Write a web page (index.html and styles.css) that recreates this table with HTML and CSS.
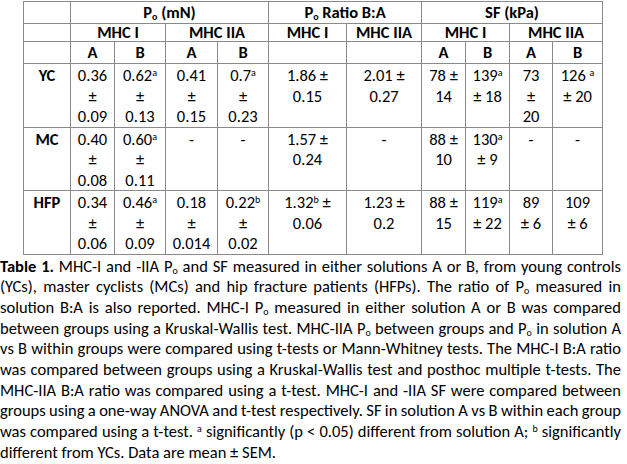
FILE: index.html
```html
<!DOCTYPE html>
<html>
<head>
<meta charset="utf-8">
<link rel="stylesheet" href="styles.css">
</head>
<body>
<div class="figure">
  <table class="data">
    <colgroup>
      <col class="c-grp"><col class="c1"><col class="c2"><col class="c3"><col class="c4">
      <col class="c5"><col class="c6"><col class="c7"><col class="c8"><col class="c9"><col class="c10">
    </colgroup>
    <tr class="h1">
      <th></th>
      <th colspan="4">P<sub>o</sub> (mN)</th>
      <th colspan="2">P<sub>o</sub> Ratio B:A</th>
      <th colspan="4">SF (kPa)</th>
    </tr>
    <tr class="h2">
      <th></th>
      <th colspan="2">MHC I</th>
      <th colspan="2">MHC IIA</th>
      <th>MHC I</th>
      <th>MHC IIA</th>
      <th colspan="2">MHC I</th>
      <th colspan="2">MHC IIA</th>
    </tr>
    <tr class="h3">
      <th></th>
      <th>A</th><th>B</th><th>A</th><th>B</th>
      <th></th><th></th>
      <th>A</th><th>B</th><th>A</th><th>B</th>
    </tr>
    <tr class="row">
      <th class="grp">YC</th>
      <td>0.36<br>±<br>0.09</td>
      <td>0.62<sup>a</sup><br>±<br>0.13</td>
      <td>0.41<br>±<br>0.15</td>
      <td>0.7<sup>a</sup><br>±<br>0.23</td>
      <td>1.86 ±<br>0.15</td>
      <td>2.01 ±<br>0.27</td>
      <td>78 ±<br>14</td>
      <td>139<sup>a</sup><br>± 18</td>
      <td>73<br>±<br>20</td>
      <td>126 <sup>a</sup><br>± 20</td>
    </tr>
    <tr class="row">
      <th class="grp">MC</th>
      <td>0.40<br>±<br>0.08</td>
      <td>0.60<sup>a</sup><br>±<br>0.11</td>
      <td>-</td>
      <td>-</td>
      <td>1.57 ±<br>0.24</td>
      <td>-</td>
      <td>88 ±<br>10</td>
      <td>130<sup>a</sup><br>± 9</td>
      <td>-</td>
      <td>-</td>
    </tr>
    <tr class="row">
      <th class="grp">HFP</th>
      <td>0.34<br>±<br>0.06</td>
      <td>0.46<sup>a</sup><br>±<br>0.09</td>
      <td>0.18<br>±<br>0.014</td>
      <td>0.22<sup>b</sup><br>±<br>0.02</td>
      <td>1.32<sup>b</sup> ±<br>0.06</td>
      <td>1.23 ±<br>0.2</td>
      <td>88 ±<br>15</td>
      <td>119<sup>a</sup><br>± 22</td>
      <td>89<br>± 6</td>
      <td>109<br>± 6</td>
    </tr>
  </table>
  <p class="caption">
    <span class="ln"><b>Table 1.</b> MHC-I and -IIA P<sub>o</sub> and SF measured in either solutions A or B, from young controls</span>
    <span class="ln">(YCs), master cyclists (MCs) and hip fracture patients (HFPs). The ratio of P<sub>o</sub> measured in</span>
    <span class="ln">solution B:A is also reported. MHC-I P<sub>o</sub> measured in either solution A or B was compared</span>
    <span class="ln">between groups using a Kruskal-Wallis test. MHC-IIA P<sub>o</sub> between groups and P<sub>o</sub> in solution A</span>
    <span class="ln">vs B within groups were compared using t-tests or Mann-Whitney tests. The MHC-I B:A ratio</span>
    <span class="ln">was compared between groups using a Kruskal-Wallis test and posthoc multiple t-tests. The</span>
    <span class="ln">MHC-IIA B:A ratio was compared using a t-test. MHC-I and -IIA SF were compared between</span>
    <span class="ln tight">groups using a one-way ANOVA and t-test respectively. SF in solution A vs B within each group</span>
    <span class="ln">was compared using a t-test. <sup>a</sup> significantly (p &lt; 0.05) different from solution A; <sup>b</sup> significantly</span>
    <span class="ln last">different from YCs. Data are mean ± SEM.</span>
  </p>
</div>
</body>
</html>
```

FILE: styles.css
```css
html, body {
  margin: 0;
  padding: 0;
  background: #ffffff;
}

body {
  font-family: Carlito, Lato, "Liberation Sans", sans-serif;
  font-size: 16.5px;
  color: #000000;
}

.figure {
  width: 622px;
  padding-top: 1px;
}

.data {
  margin-left: 23px;
  width: 580px;
  border-collapse: collapse;
  table-layout: fixed;
  font-size: 16.5px;
}

.c-grp { width: 47px; }
.c1 { width: 44px; }
.c2 { width: 51px; }
.c3 { width: 52px; }
.c4 { width: 51px; }
.c5 { width: 78px; }
.c6 { width: 75px; }
.c7 { width: 44px; }
.c8 { width: 44px; }
.c9 { width: 43px; }
.c10 { width: 50px; }

.data th,
.data td {
  border: 1px solid #8a8a8a;
  padding: 0;
  text-align: center;
  vertical-align: top;
  line-height: 20.5px;
  white-space: nowrap;
  overflow: visible;
}

.data th {
  font-weight: bold;
}

.h1 th { height: 21px; line-height: 21px; }
.h2 th { height: 17px; line-height: 17px; }
.h3 th { height: 20px; line-height: 21px; }

.row td,
.row th {
  height: 61px;
  padding-top: 1px;
}

sub {
  font-size: 10px;
  vertical-align: -2px;
  line-height: 0;
}

sup {
  font-size: 10px;
  vertical-align: 5px;
  line-height: 0;
}

.caption {
  margin: 0;
  padding-top: 1px;
  width: 621px;
  line-height: 20.7px;
  text-align: justify;
}

.ln {
  display: block;
  white-space: nowrap;
  text-align: justify;
  text-align-last: justify;
}

.ln.tight {
  word-spacing: -2px;
}

.ln.last {
  text-align-last: left;
}
```
